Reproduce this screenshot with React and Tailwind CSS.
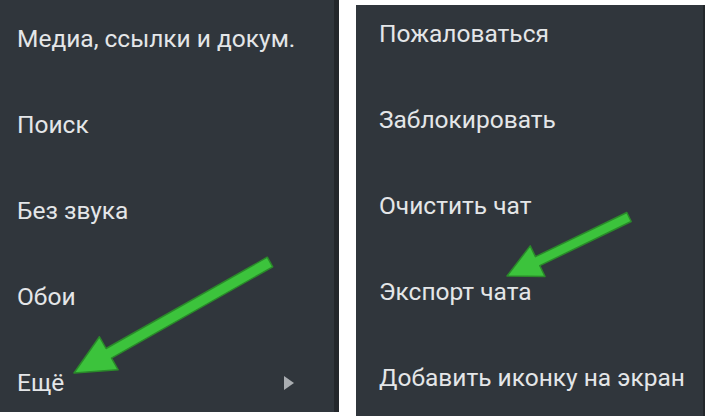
import React from "react";

const Item = ({ children, right, pl }) => (
  <div className={`h-[86px] flex items-center justify-between whitespace-nowrap text-[#e4e6e8] text-[24.5px] ${pl}`}>
    <span>{children}</span>
    {right}
  </div>
);

const Arrow = ({ x1, y1, x2, y2, head, hw, sw, className }) => {
  const dx = x2 - x1, dy = y2 - y1;
  const len = Math.hypot(dx, dy);
  const ux = dx / len, uy = dy / len;
  const px = -uy, py = ux;
  const bx = x2 - ux * head, by = y2 - uy * head;
  const pts = [
    [x1 + px * sw / 2, y1 + py * sw / 2],
    [bx + px * sw / 2, by + py * sw / 2],
    [bx + px * hw, by + py * hw],
    [x2, y2],
    [bx - px * hw, by - py * hw],
    [bx - px * sw / 2, by - py * sw / 2],
    [x1 - px * sw / 2, y1 - py * sw / 2],
  ].map(p => p.join(",")).join(" ");
  return (
    <svg className={className} width="705" height="416" viewBox="0 0 705 416">
      <polygon points={pts} fill="#3cc33c" stroke="#2a8a2a" strokeWidth="1.5" strokeLinejoin="round" />
    </svg>
  );
};

export default function App() {
  const L = { pl: "pl-[17px]" };
  const R = { pl: "pl-[23px]" };
  return (
    <div className="relative w-[705px] h-[416px] bg-white overflow-hidden" style={{ fontFamily: "Roboto, 'Noto Sans', sans-serif" }}>
      <div className="flex h-full">
        <div className="w-[339px] shrink-0 h-[412px] bg-[#30363c] border-r-[5px] border-r-[#23272b] overflow-hidden">
          <div className="-mt-[4px]">
            <Item {...L}>Медиа, ссылки и докум.</Item>
            <Item {...L}>Поиск</Item>
            <Item {...L}>Без звука</Item>
            <Item {...L}>Обои</Item>
            <Item {...L} right={<svg className="mr-[40px]" width="10" height="14" viewBox="0 0 10 14"><polygon points="0,0 10,7 0,14" fill="#a9adb1" /></svg>}>Ещё</Item>
          </div>
        </div>
        <div className="w-[17px] shrink-0" />
        <div className="flex-1 min-w-0 mt-[5px] bg-[#30363c] border-r-[2px] border-r-[#23272b] overflow-hidden">
          <div className="-mt-[14px]">
            <Item {...R}>Пожаловаться</Item>
            <Item {...R}>Заблокировать</Item>
            <Item {...R}>Очистить чат</Item>
            <Item {...R}>Экспорт чата</Item>
            <Item {...R}>Добавить иконку на экран</Item>
          </div>
        </div>
      </div>
      <Arrow className="absolute inset-0 pointer-events-none" x1={270} y1={262} x2={74} y2={373} head={40} hw={19} sw={11} />
      <Arrow className="absolute inset-0 pointer-events-none" x1={629} y1={217} x2={507} y2={276} head={34} hw={17} sw={10} />
    </div>
  );
}
